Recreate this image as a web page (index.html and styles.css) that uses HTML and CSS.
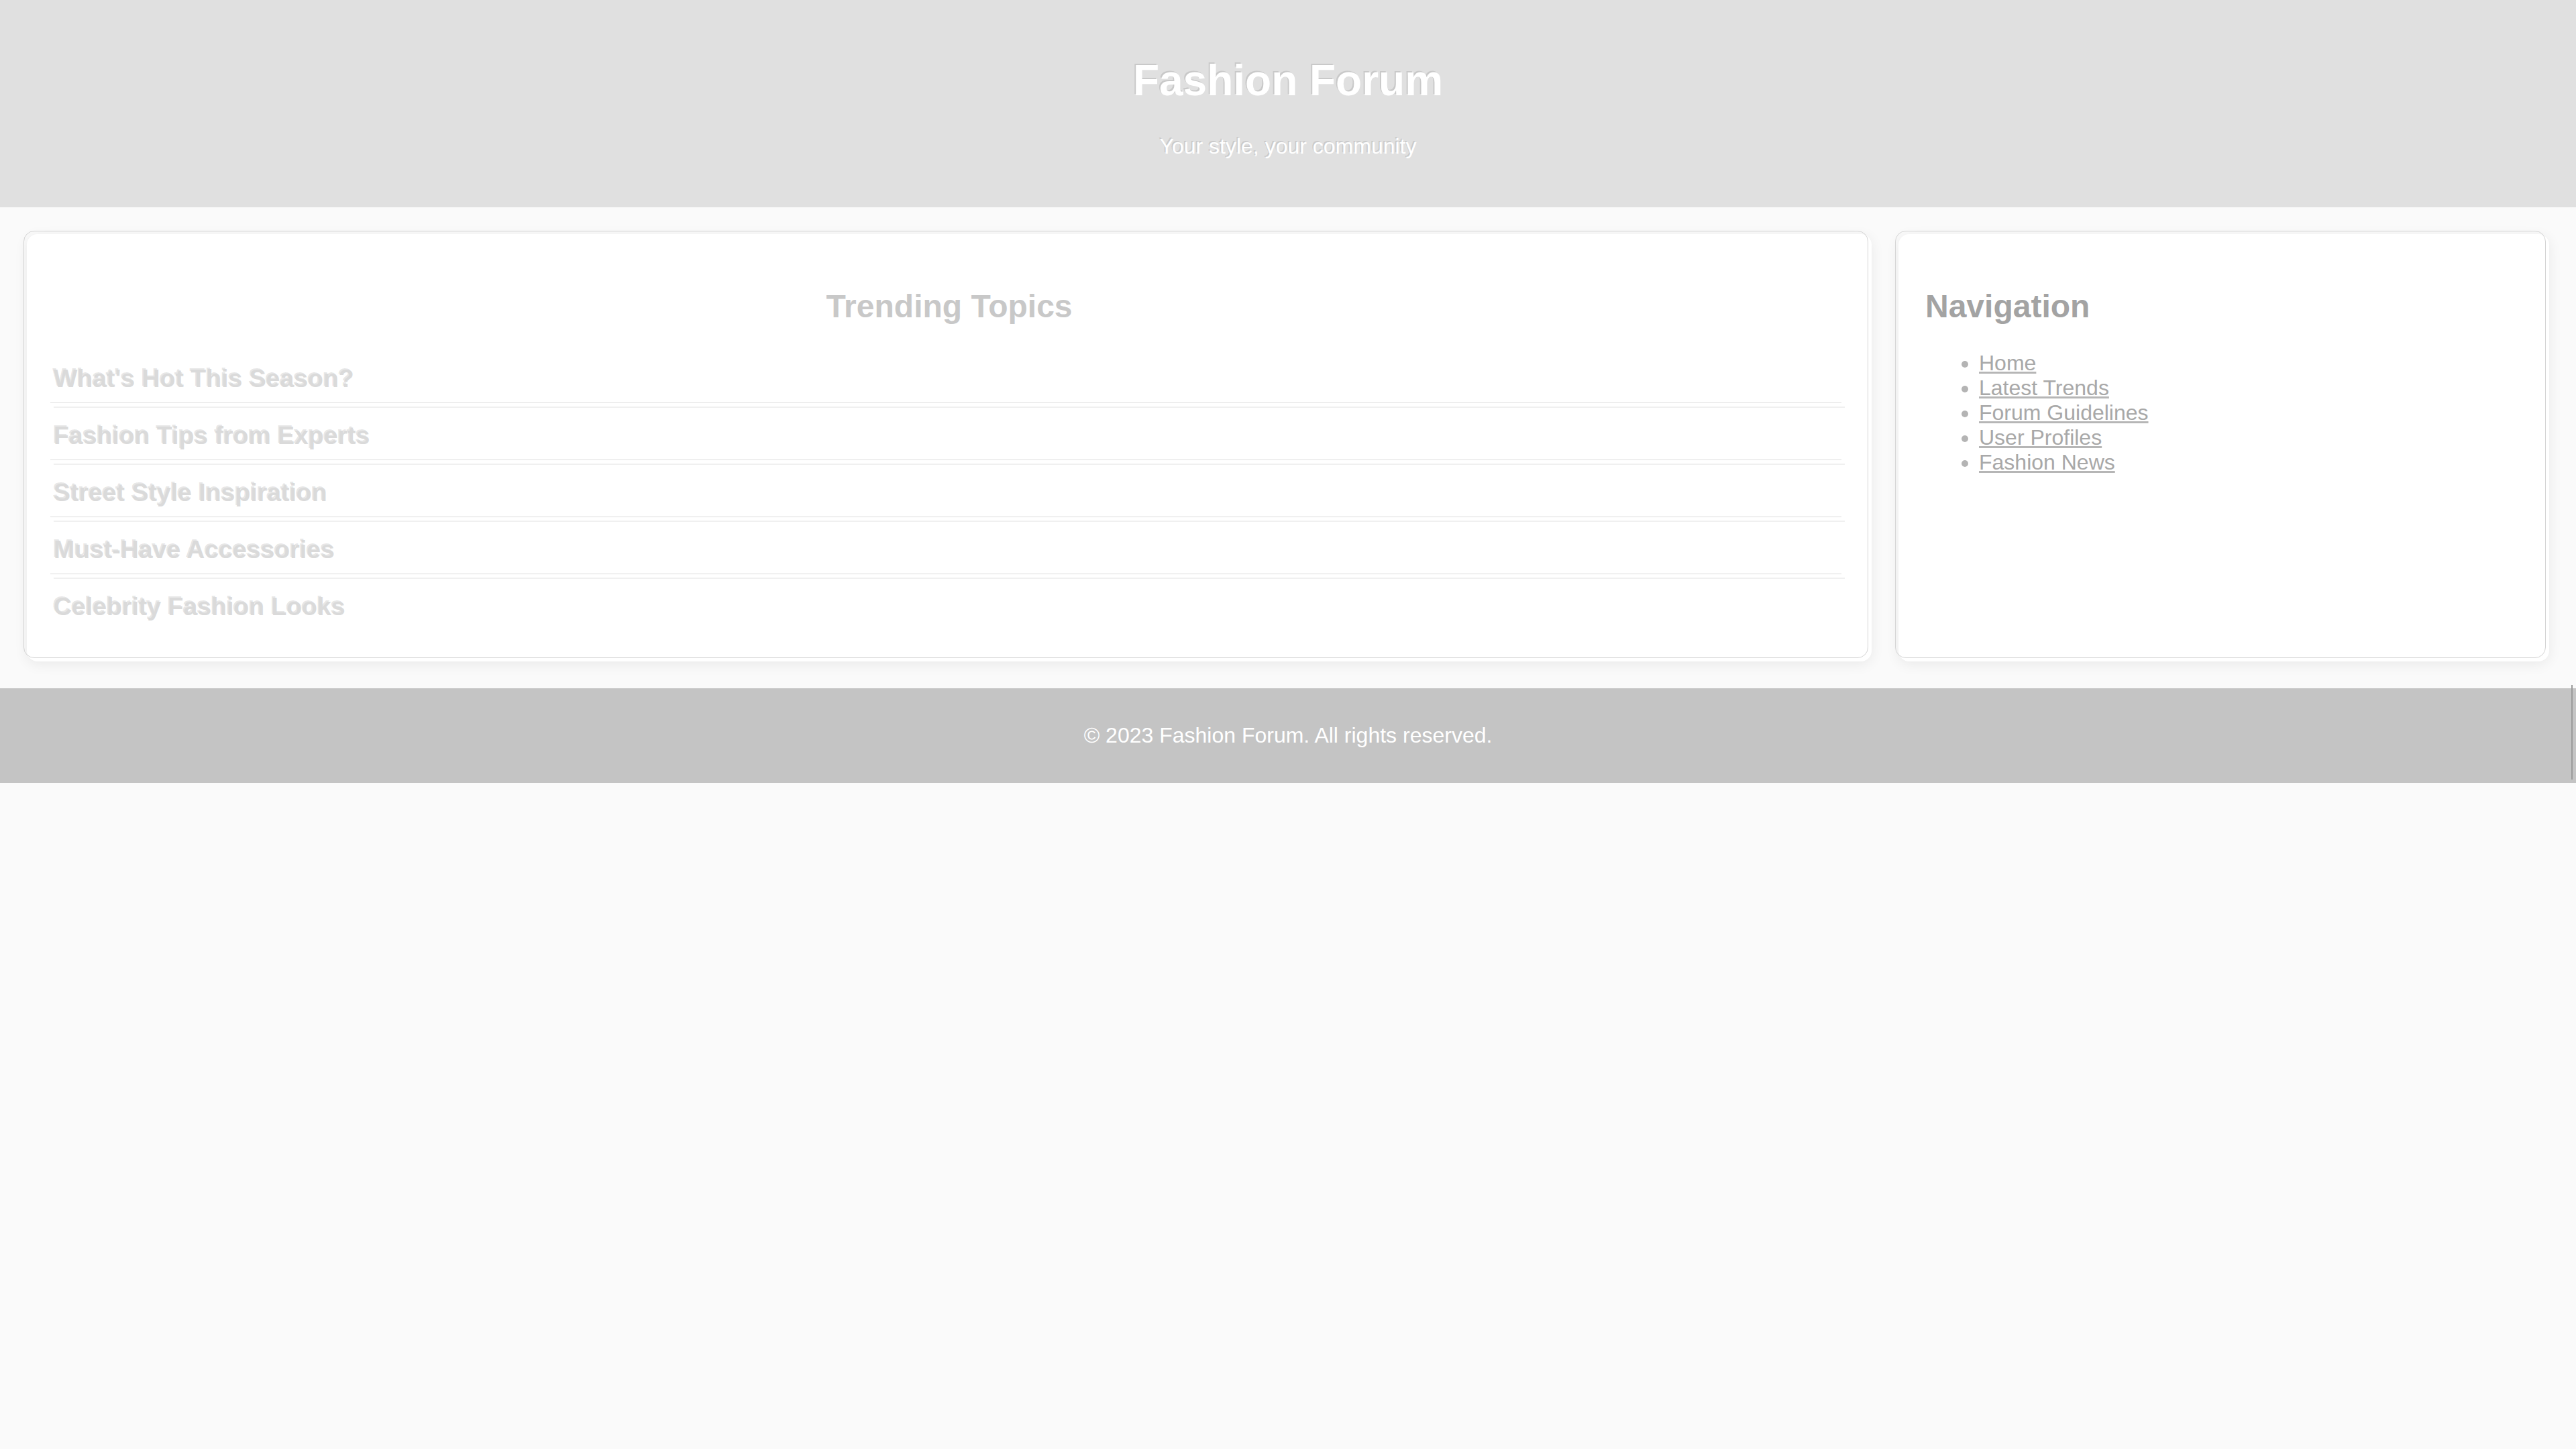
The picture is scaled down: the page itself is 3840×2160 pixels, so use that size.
FILE: index.html
```html
<!DOCTYPE html>
<html lang="en">
<head>
<meta charset="utf-8">
<title>Fashion Forum</title>
<link rel="stylesheet" href="styles.css">
</head>
<body>
<header class="site-header">
  <h1 class="site-title">Fashion Forum</h1>
  <p class="site-tagline">Your style, your community</p>
</header>
<main class="layout">
  <section class="card main-content">
    <h2 class="card-title card-title-center">Trending Topics</h2>
    <ul class="topic-list">
      <li class="topic"><h3 class="topic-title">What's Hot This Season?</h3></li>
      <li class="topic"><h3 class="topic-title">Fashion Tips from Experts</h3></li>
      <li class="topic"><h3 class="topic-title">Street Style Inspiration</h3></li>
      <li class="topic"><h3 class="topic-title">Must-Have Accessories</h3></li>
      <li class="topic"><h3 class="topic-title">Celebrity Fashion Looks</h3></li>
    </ul>
  </section>
  <aside class="card sidebar">
    <h2 class="card-title card-title-dark">Navigation</h2>
    <ul class="nav-list">
      <li><a class="nav-link" href="#">Home</a></li>
      <li><a class="nav-link" href="#">Latest Trends</a></li>
      <li><a class="nav-link" href="#">Forum Guidelines</a></li>
      <li><a class="nav-link" href="#">User Profiles</a></li>
      <li><a class="nav-link" href="#">Fashion News</a></li>
    </ul>
  </aside>
</main>
<footer class="site-footer">
  <span class="footer-text">© 2023 Fashion Forum. All rights reserved.</span>
</footer>
</body>
</html>
```

FILE: styles.css
```css
html, body {
  margin: 0;
  padding: 0;
}

body {
  background: #fafafa;
  font-family: "Liberation Sans", Arial, sans-serif;
  font-size: 32px;
  color: #b0b0b0;
}

.site-header {
  background: #e0e0e0;
  padding: 40px;
  text-align: center;
  color: #ffffff;
}

.site-title {
  font-size: 64px;
  font-weight: bold;
  margin: 42.88px 0;
  text-shadow: -2px -2px 0 rgba(0, 0, 0, 0.1);
}

.site-tagline {
  font-size: 32px;
  margin: 32px 0 32px;
  text-shadow: -2px -2px 0 rgba(0, 0, 0, 0.1);
}

.layout {
  display: flex;
  gap: 40px;
  padding: 40px;
  align-items: stretch;
}

.card {
  position: relative;
  background: #ffffff;
  border-radius: 16px;
  padding: 40px;
  box-shadow: 0 4px 20px rgba(0, 0, 0, 0.07);
}

.card::before {
  content: "";
  position: absolute;
  left: -5px;
  top: -5px;
  right: 5px;
  bottom: 5px;
  border: 1px solid #d4d4d4;
  border-radius: 16px;
  pointer-events: none;
}

.main-content {
  flex: 3 1 0;
}

.sidebar {
  flex: 1 1 0;
}

.card-title {
  font-size: 48px;
  font-weight: bold;
  margin: 39.84px 0;
}

.card-title-center {
  text-align: center;
  color: #c8c8c8;
}

.card-title-dark {
  color: #a3a3a3;
}

.topic-list {
  list-style: none;
  margin: 0;
  padding: 0;
}

.topic {
  position: relative;
  padding: 20px 0;
  border-bottom: 2px solid #f0f0f0;
}

.topic::after {
  content: "";
  position: absolute;
  left: -5px;
  right: 5px;
  bottom: 5px;
  height: 1px;
  background: #dcdcdc;
}

.topic:last-child {
  border-bottom: none;
}

.topic:last-child::after {
  display: none;
}

.topic-title {
  margin: 0;
  font-size: 37.44px;
  font-weight: bold;
  color: #dadada;
  text-shadow: -2px -2px 0 rgba(0, 0, 0, 0.1);
}

.nav-list {
  margin: 32px 0;
  padding-left: 80px;
  color: #b4b4b4;
}

.nav-link {
  color: #a8a8a8;
  text-decoration: underline;
  text-decoration-color: #b6b6b6;
}

.site-footer {
  position: relative;
  background: #c4c4c4;
  color: #ffffff;
  text-align: center;
  padding: 51.6px 0;
}

.site-footer::after {
  content: "";
  position: absolute;
  right: 5px;
  top: -5px;
  bottom: 5px;
  width: 2px;
  background: #9a9a9a;
}
```
